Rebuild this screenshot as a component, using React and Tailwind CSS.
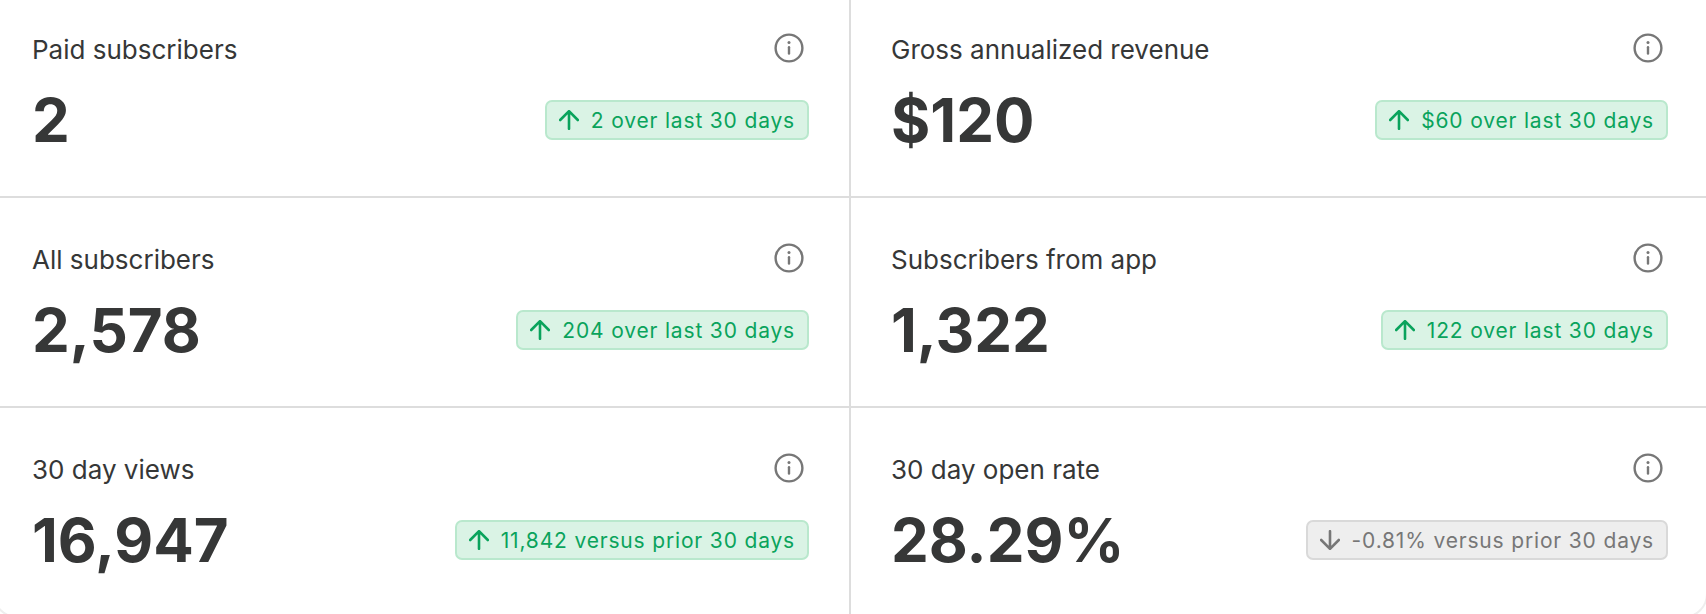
const Arrow = ({ down }) => (
  <svg width="20" height="20" viewBox="0 0 20 20" fill="none" stroke="currentColor" strokeWidth="2.6" strokeLinecap="round" strokeLinejoin="round" className="shrink-0">
    {down ? <path d="M10 1.2V18.8M1.2 10L10 18.8L18.8 10" /> : <path d="M10 18.8V1.2M1.2 10L10 1.2L18.8 10" />}
  </svg>
);

const Info = () => (
  <svg width="30" height="30" viewBox="0 0 30 30" fill="none" className="text-[#777777] shrink-0 mr-[5px]">
    <circle cx="15" cy="15" r="13.4" stroke="currentColor" strokeWidth="2.4" />
    <path d="M15 14.2V20.5" stroke="currentColor" strokeWidth="2.4" strokeLinecap="round" />
    <circle cx="15" cy="9.6" r="1.5" fill="currentColor" />
  </svg>
);

const Card = ({ label, value, badge, down, right, row }) => (
  <div
    className={`flex flex-col ${row === 0 ? "pt-[31px]" : "pt-[43px]"} ${
      right ? "flex-1 min-w-0 pl-[40px] pr-[38px]" : "w-[856px] shrink-0 pl-[37px] pr-[40px] border-r-2 border-r-[#dddddd]"
    } ${row === 2 ? "" : "border-b-2 border-b-[#dddddd]"}`}
  >
    <div className="flex items-center justify-between h-[34px]">
      <span className="text-[26px] leading-[34px] pt-[3px] text-[#363737]">{label}</span>
      <Info />
    </div>
    <div className="flex items-center justify-between mt-[15px] h-[80px]">
      <span className="text-[60px] leading-[80px] font-bold text-[#363737]">{value}</span>
      <span
        className={`flex items-center gap-[12px] h-[40px] pl-[12px] pr-[12px] rounded-[7px] border-2 text-[21px] tracking-[0.83px] ${
          down ? "bg-[#eeeeee] border-[#d9d9d9] text-[#777777]" : "bg-[#daf3e5] border-[#b9e8cd] text-[#0aa35c]"
        }`}
      >
        <Arrow down={down} />
        <span className="pt-[2px]">{badge}</span>
      </span>
    </div>
  </div>
);

const rows = [
  [
    { label: "Paid subscribers", value: "2", badge: "2 over last 30 days" },
    { label: "Gross annualized revenue", value: "$120", badge: "$60 over last 30 days" },
  ],
  [
    { label: "All subscribers", value: "2,578", badge: "204 over last 30 days" },
    { label: "Subscribers from app", value: "1,322", badge: "122 over last 30 days" },
  ],
  [
    { label: "30 day views", value: "16,947", badge: "11,842 versus prior 30 days" },
    { label: "30 day open rate", value: "28.29%", badge: "-0.81% versus prior 30 days", down: true },
  ],
];

export default function App() {
  return (
    <div className="w-[1706px] h-[614px] bg-white overflow-hidden font-['Inter',sans-serif]">
      <div className="w-[1715px] h-[618px] -ml-[7px] flex flex-col rounded-b-[24px] border-x-2 border-b-2 border-[#eeeeee]">
        {rows.map((r, i) => (
          <div key={i} className={`flex ${i === 0 ? "h-[198px]" : i === 1 ? "h-[210px]" : "flex-1"}`}>
            <Card {...r[0]} row={i} />
            <Card {...r[1]} right row={i} />
          </div>
        ))}
      </div>
    </div>
  );
}
